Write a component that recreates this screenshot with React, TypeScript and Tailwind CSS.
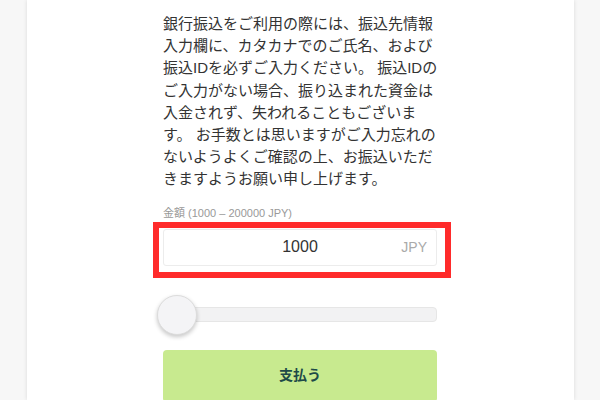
import React from "react";

const font = {
  fontFamily: '"Liberation Sans", Arial, "Noto Sans CJK JP", sans-serif',
};

const lines = [
  "銀行振込をご利用の際には、振込先情報",
  "入力欄に、カタカナでのご氏名、および",
  "振込IDを必ずご入力ください。 振込IDの",
  "ご入力がない場合、振り込まれた資金は",
  "入金されず、失われることもございま",
  "す。 お手数とは思いますがご入力忘れの",
  "ないようよくご確認の上、お振込いただ",
  "きますようお願い申し上げます。",
];

function AmountInput() {
  return (
    <div className="relative mt-[8px]">
      <div className="flex h-[37px] items-center rounded-[3px] border border-[#ececec] bg-white">
        <div className="flex-1 text-center text-[16px] text-[#333]">1000</div>
        <div className="absolute right-[10px] top-[8px] text-[14px] text-[#aaa]">JPY</div>
      </div>
      {/* highlight annotation */}
      <div className="pointer-events-none absolute left-[-10px] top-[-7px] h-[56px] w-[298px] border-[6px] border-[#ff2b2b]" />
    </div>
  );
}

function Slider() {
  return (
    <div className="relative mt-[29px] flex h-[40px] items-center">
      <div className="h-[15px] w-full rounded-[4px] border border-[#e6e6e6] bg-[#f2f2f3]" />
      <div className="absolute left-[-6px] top-0 h-[40px] w-[40px] rounded-full border border-[#dcdcdc] bg-[#f4f4f6] shadow-[0_2px_4px_rgba(0,0,0,0.22)]" />
    </div>
  );
}

export default function App() {
  return (
    <div className="flex h-[400px] w-full justify-center overflow-hidden bg-[#f7f7f7]" style={font}>
      <div className="flex h-full w-[547px] justify-center bg-white shadow-[0_0_4px_rgba(0,0,0,0.12)]">
        <div className="w-[274px] pt-[13px]">
          <p className="whitespace-nowrap text-[15px] leading-[22.2px] text-[#333]">
            {lines.map((l, i) => (
              <React.Fragment key={i}>
                {l}
                {i < lines.length - 1 && <br />}
              </React.Fragment>
            ))}
          </p>
          <div className="mt-[14px] text-[11px] leading-[16px] text-[#999]">
            金額 (1000 – 200000 JPY)
          </div>
          <AmountInput />
          <Slider />
          <button className="mt-[15px] flex h-[52px] w-full items-center justify-center rounded-[4px] bg-[#c8ea8f] text-[14px] font-bold text-[#1e4a48]">
            支払う
          </button>
        </div>
      </div>
    </div>
  );
}
